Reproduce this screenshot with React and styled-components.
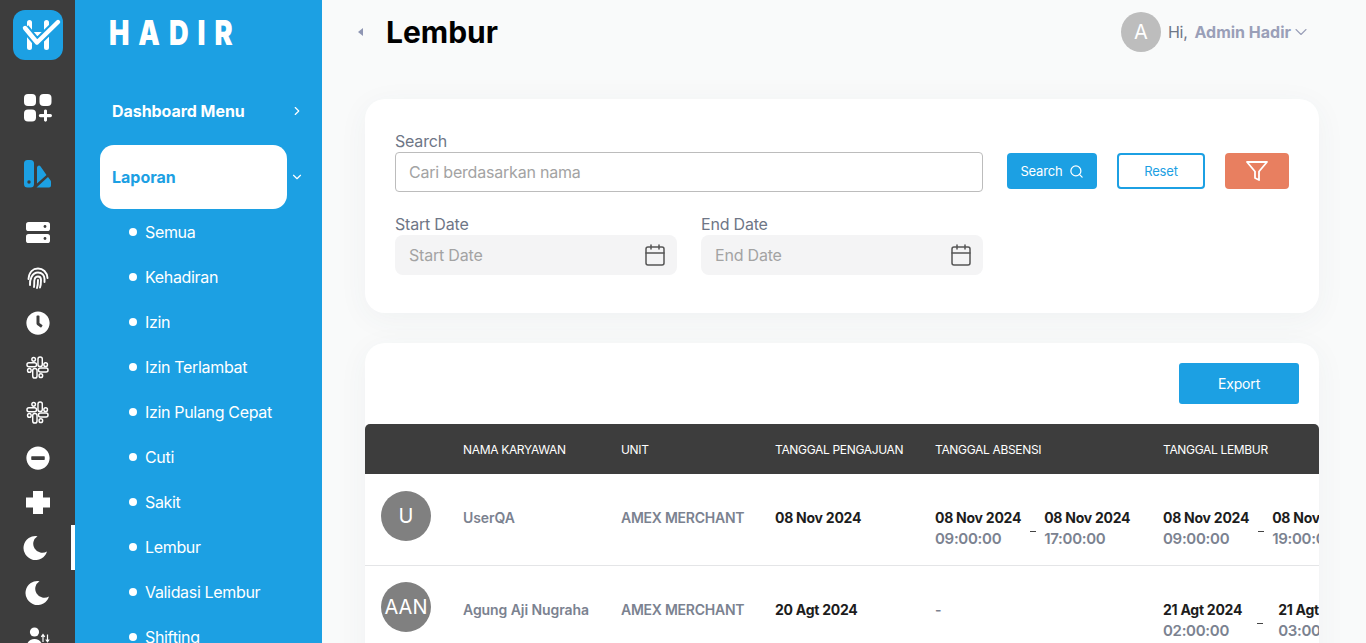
import React from "react";
import styled, { createGlobalStyle } from "styled-components";
import { Calendar, ChevronDown, ChevronRight, Search } from "lucide-react";
import { FiFilter } from "react-icons/fi";
import { FaClock, FaMinusCircle } from "react-icons/fa";

const BLUE = "#1ca0e3";
const DARK = "#3d3d3d";
const FONT = `Inter, "Noto Sans", "Liberation Sans", sans-serif`;

const GlobalStyle = createGlobalStyle`
  html, body {
    margin: 0;
    height: 100%;
    overflow: hidden;
    font-family: ${FONT};
    background: #f9fafa;
  }
  * { box-sizing: border-box; }
`;

const Shell = styled.div`
  display: flex;
  height: 100vh;
  overflow: hidden;
`;

const Rail = styled.aside`
  width: 75px;
  flex: none;
  background: ${DARK};
  padding-top: 10px;
  display: flex;
  flex-direction: column;
  overflow: hidden;
`;

const LogoTile = styled.div`
  width: 50px;
  height: 50px;
  flex: none;
  margin: 0 0 25px 13px;
  border-radius: 12px;
  background: ${BLUE};
  svg { display: block; }
`;

const RailItem = styled.div`
  height: 45px;
  flex: none;
  display: flex;
  align-items: center;
  justify-content: center;
  color: #fff;
  margin-top: ${(p) => p.$top || 0}px;
  border-right: ${(p) => (p.$active ? "4px solid #fff" : "none")};
  svg { display: block; }
`;

const Sidebar = styled.aside`
  width: 247px;
  flex: none;
  background: ${BLUE};
  color: #fff;
  overflow: hidden;
`;

const Brand = styled.div`
  height: 81px;
  padding: 14px 0 0 34px;
  font-size: 34px;
  line-height: 38px;
  font-weight: 900;
  letter-spacing: 11.2px;
  transform: scaleX(0.8);
  transform-origin: 34px 0;
`;

const NavRow = styled.div`
  display: flex;
  align-items: center;
  justify-content: space-between;
  width: 229px;
  height: 59px;
  padding-left: 37px;
  font-size: 16px;
  font-weight: 700;
  letter-spacing: -0.05px;
`;

const OpenRow = styled.div`
  display: flex;
  align-items: center;
  gap: 3px;
  margin: 5px 0 0 25px;
`;

const ActivePill = styled.div`
  width: 187px;
  height: 64px;
  padding-left: 12px;
  display: flex;
  align-items: center;
  background: #fff;
  border-radius: 14px;
  color: ${BLUE};
  font-size: 16px;
  font-weight: 700;
`;

const SubItem = styled.div`
  height: 45px;
  display: flex;
  align-items: center;
  gap: 8px;
  padding-left: 54px;
  font-size: 16px;
  letter-spacing: -0.33px;
  white-space: nowrap;
  &::before {
    content: "";
    width: 8px;
    height: 8px;
    border-radius: 50%;
    background: #fff;
  }
`;

const Main = styled.main`
  flex: 1;
  min-width: 0;
  padding: 0 47px 0 43px;
  overflow: hidden;
`;

const Topbar = styled.header`
  height: 64px;
  display: flex;
  align-items: center;
`;

const Collapse = styled.span`
  width: 0;
  height: 0;
  margin: 0 23px 0 -7px;
  border-style: solid;
  border-width: 4.5px 5px 4.5px 0;
  border-color: transparent #8f96b3 transparent transparent;
`;

const Title = styled.h1`
  margin: 0;
  flex: 1;
  font-size: 30px;
  font-weight: 700;
  color: #000;
`;

const UserMenu = styled.div`
  display: flex;
  align-items: center;
  margin-right: 8px;
  font-size: 16px;
  color: #6e7686;
`;

const Avatar = styled.div`
  width: ${(p) => p.$size}px;
  height: ${(p) => p.$size}px;
  flex: none;
  border-radius: 50%;
  background: ${(p) => p.$bg};
  color: #fff;
  font-size: 20px;
  display: flex;
  align-items: center;
  justify-content: center;
`;

const Hi = styled.span`
  margin: 0 7px;
  letter-spacing: -0.3px;
`;

const UserName = styled.strong`
  font-weight: 700;
  color: #9a9fb8;
`;

const Card = styled.section`
  background: #fff;
  border-radius: 20px;
  box-shadow: 0 6px 30px rgba(60, 70, 90, 0.05);
  margin-top: ${(p) => p.$top}px;
`;

const FilterCard = styled(Card)`
  height: 214px;
  padding: 32px 30px 0;
`;

const FormRow = styled.div`
  display: flex;
  gap: 24px;
  margin-bottom: 22px;
`;

const Field = styled.label`
  display: block;
  width: ${(p) => p.$width}px;
  font-size: 16px;
  line-height: 20px;
  color: #6e7686;
  letter-spacing: -0.2px;
`;

const InputWrap = styled.div`
  position: relative;
  margin-top: 1px;
  height: 40px;
`;

const Input = styled.input`
  width: 100%;
  height: 100%;
  padding: 0 13px;
  font: inherit;
  letter-spacing: -0.2px;
  color: #333;
  outline: none;
  border: ${(p) => (p.$filled ? "none" : "1px solid #bcbcbc")};
  border-radius: ${(p) => (p.$filled ? 8 : 4)}px;
  background: ${(p) => (p.$filled ? "#f4f4f5" : "#fff")};
  padding-left: ${(p) => (p.$filled ? 14 : 13)}px;
  &::placeholder { color: #a3a3a3; opacity: 1; }
`;

const CalendarMark = styled.span`
  position: absolute;
  right: 10px;
  top: 8px;
  color: #555;
  line-height: 0;
`;

const Actions = styled.div`
  display: flex;
  gap: 20px;
  padding-top: 22px;
`;

const Button = styled.button`
  height: 36px;
  width: ${(p) => p.$width}px;
  padding: 0;
  display: flex;
  align-items: center;
  justify-content: center;
  gap: 6px;
  font-family: ${FONT};
  font-size: 13px;
  letter-spacing: -0.15px;
  color: #fff;
  background: ${BLUE};
  border: none;
  border-radius: 4px;
`;

const ResetButton = styled(Button)`
  background: #fff;
  color: ${BLUE};
  border: 2px solid ${BLUE};
`;

const FilterButton = styled(Button)`
  background: #e87f60;
`;

const TableCard = styled(Card)`
  height: 400px;
  overflow: hidden;
  padding-top: 20px;
`;

const TableTools = styled.div`
  display: flex;
  justify-content: flex-end;
  padding-right: 20px;
  margin-bottom: 20px;
`;

const ExportButton = styled(Button)`
  width: 120px;
  height: 41px;
  font-size: 14px;
  border-radius: 3px;
`;

const columns = "98px 158px 154px 160px 228px 1fr";

const HeadRow = styled.div`
  display: grid;
  grid-template-columns: ${columns};
  align-items: center;
  height: 50px;
  background: ${DARK};
  border-radius: 5px 5px 0 0;
  color: #fff;
  font-size: 12px;
  font-weight: 400;
  letter-spacing: -0.33px;
  white-space: nowrap;
`;

const Row = styled.div`
  display: grid;
  grid-template-columns: ${columns};
  align-items: center;
  height: 91.5px;
  padding-bottom: 3px;
  border-bottom: 1px solid #e4e5e7;
  white-space: nowrap;
`;

const AvatarCell = styled.div`
  padding-left: 16px;
  margin-top: -4px;
`;

const MutedCell = styled.div`
  font-size: 14px;
  font-weight: 600;
  letter-spacing: -0.25px;
  color: #7b8290;
`;

const NameCell = styled(MutedCell)`
  letter-spacing: -0.07px;
`;

const DateCell = styled.div`
  font-size: 14px;
  font-weight: 700;
  letter-spacing: -0.25px;
  color: #1d1d1d;
`;

const RangeCell = styled.div`
  display: flex;
  align-items: center;
  gap: ${(p) => p.$gap}px;
  margin-top: 21px;
`;

const DateStack = styled.div`
  font-size: 14px;
  line-height: 21px;
  font-weight: 700;
  letter-spacing: -0.25px;
  color: #1d1d1d;
`;

const Time = styled.div`
  font-weight: 600;
  font-size: 15px;
  letter-spacing: -0.3px;
  color: #7b8290;
`;

const Dash = styled.span`
  width: 6px;
  height: 1px;
  margin-top: 7px;
  background: #444;
  flex: none;
`;

const AppLogo = () => (
  <svg width="50" height="50" viewBox="0 0 50 50" fill="none">
    <path d="M16.5 12.5v25M33.5 12.5v25" stroke="#fff" strokeWidth="5" strokeLinecap="round" />
    <path d="M17 24h16" stroke="#fff" strokeWidth="4" />
    <path d="M12 18l12 14.5L45 12" stroke={BLUE} strokeWidth="8.5" strokeLinecap="butt" />
    <path d="M12 18l12 14.5L45 12" stroke="#fff" strokeWidth="4.4" strokeLinecap="round" strokeLinejoin="round" />
  </svg>
);

const GridPlus = () => (
  <svg width="28" height="28" viewBox="0 0 28 28" fill="#fff">
    <rect x="0" y="0" width="12" height="12" rx="4" />
    <rect x="15.5" y="0" width="12" height="12" rx="4" />
    <rect x="0" y="15.5" width="12" height="12" rx="4" />
    <path d="M20 16.5a1.6 1.6 0 0 1 3 0V20h3.4a1.6 1.6 0 0 1 0 3.2H23v3.4a1.6 1.6 0 0 1-3 0v-3.4h-3.6a1.6 1.6 0 0 1 0-3.2H20z" />
  </svg>
);

const BrandMark = () => (
  <svg width="28" height="28" viewBox="0 0 28 28">
    <path d="M3.5 0h3A3.5 3.5 0 0 1 10 3.5V24a3.5 3.5 0 0 1-3.5 3.5h-3A3.5 3.5 0 0 1 0 24V3.5A3.5 3.5 0 0 1 3.5 0z" fill={BLUE} />
    <circle cx="5" cy="22" r="1.7" fill={DARK} />
    <path d="M13 7.5a2 2 0 0 1 3.4-1.3L22.5 15 13 23.5z" fill={BLUE} />
    <path d="M12.5 27.5L24 17l2.6 3.4a2 2 0 0 1 .4 1.4v3.7a2 2 0 0 1-2 2z" fill={BLUE} />
  </svg>
);

const ServerIcon = () => (
  <svg width="26" height="24" viewBox="0 0 26 24" fill="#fff">
    <rect x="1" y="1" width="24" height="9" rx="2.6" />
    <rect x="1" y="13" width="24" height="9" rx="2.6" />
    <circle cx="20" cy="5.5" r="1.4" fill={DARK} />
    <circle cx="20" cy="17.5" r="1.4" fill={DARK} />
  </svg>
);

const FingerIcon = () => (
  <svg width="24" height="22" viewBox="0 0 24 22" fill="none" stroke="#fff" strokeWidth="1.9" strokeLinecap="round">
    <path d="M2.5 12C3 5 7 1.5 12 1.5S21 5 21.5 11" />
    <path d="M4 18c-.2-2 0-5 1.5-8C7 7 9.5 5.5 12 5.5c4 0 6.5 3 6.5 6.5v3" />
    <path d="M8 20c.5-2 0-6 .5-7.5C9 10.5 10.5 9.5 12 9.5c2 0 3 1.5 3 3.5s0 5-1 7.5" />
    <path d="M12 13c0 2.5 0 5-1 8" />
  </svg>
);

const SlackIcon = () => (
  <svg width="23" height="23" viewBox="-1 -1 24 24" fill="none" stroke="#fff" strokeWidth="1.5">
    <rect x="11.5" y="0" width="4.5" height="10" rx="2.25" />
    <rect x="0" y="6" width="10" height="4.2" rx="2.1" />
    <circle cx="7" cy="2.5" r="1.9" />
    <circle cx="19.5" cy="8" r="1.9" />
    <rect x="12" y="11.5" width="10" height="4.2" rx="2.1" />
    <rect x="6" y="12" width="4.5" height="10" rx="2.25" />
    <circle cx="14.5" cy="19.5" r="1.9" />
    <circle cx="2.5" cy="14" r="1.9" />
  </svg>
);

const PlusIcon = () => (
  <svg width="24" height="23" viewBox="0 0 24 23" fill="#fff">
    <path d="M7 0h10v6.5h7v10h-7V23H7v-6.500H0v-10h7z" />
  </svg>
);

const MoonIcon = () => (
  <svg width="25" height="25" viewBox="0 0 25 25" fill="#fff">
    <path d="M14.5 1.2A12 12 0 1 0 24 16.5A8.600 8.600 0 0 1 14.500 1.200Z" />
  </svg>
);

const UserArrows = () => (
  <svg width="28" height="28" viewBox="0 0 28 28" fill="#fff">
    <circle cx="10.5" cy="8" r="4.600" />
    <path d="M2.5 24c0-6 3.500-9 8-9s8 3 8 9v4h-16z" />
    <path d="M19 18v-7M17.300 12.800L19 10.500l1.700 2.300M23.500 10.500v7M21.800 15.500l1.700 2.300 1.700-2.300" stroke="#fff" strokeWidth="1.200" fill="none" />
  </svg>
);

const subItems = ["Semua", "Kehadiran", "Izin", "Izin Terlambat", "Izin Pulang Cepat", "Cuti", "Sakit", "Lembur", "Validasi Lembur", "Shifting"];

const Range = ({ from, to, gap = 8.5 }) => (
  <RangeCell $gap={gap}>
    <DateStack>
      {from[0]}
      <Time>{from[1]}</Time>
    </DateStack>
    <Dash />
    <DateStack>
      {to[0]}
      <Time>{to[1]}</Time>
    </DateStack>
  </RangeCell>
);

const App = () => (
  <>
    <GlobalStyle />
    <Shell>
      <Rail>
        <LogoTile><AppLogo /></LogoTile>
        <RailItem><GridPlus /></RailItem>
        <RailItem $top={21}><BrandMark /></RailItem>
        <RailItem $top={14}><ServerIcon /></RailItem>
        <RailItem><FingerIcon /></RailItem>
        <RailItem><FaClock size={24} /></RailItem>
        <RailItem><SlackIcon /></RailItem>
        <RailItem><SlackIcon /></RailItem>
        <RailItem><FaMinusCircle size={24} /></RailItem>
        <RailItem><PlusIcon /></RailItem>
        <RailItem $active><MoonIcon /></RailItem>
        <RailItem><MoonIcon /></RailItem>
        <RailItem><UserArrows /></RailItem>
      </Rail>
      <Sidebar>
        <Brand>HADIR</Brand>
        <NavRow>
          Dashboard Menu
          <ChevronRight size={14} strokeWidth={2} />
        </NavRow>
        <OpenRow>
          <ActivePill>Laporan</ActivePill>
          <ChevronDown size={14} strokeWidth={2} />
        </OpenRow>
        {subItems.map((item) => (
          <SubItem key={item}>{item}</SubItem>
        ))}
      </Sidebar>
      <Main>
        <Topbar>
          <Collapse />
          <Title>Lembur</Title>
          <UserMenu>
            <Avatar $size={40} $bg="#bdbdbd">A</Avatar>
            <Hi>Hi,</Hi>
            <UserName>Admin Hadir</UserName>
            <ChevronDown size={20} strokeWidth={1.3} color="#9a9fb8" />
          </UserMenu>
        </Topbar>
        <FilterCard $top={35}>
          <FormRow>
            <Field $width={588}>
              Search
              <InputWrap>
                <Input placeholder="Cari berdasarkan nama" />
              </InputWrap>
            </Field>
            <Actions>
              <Button $width={90}>Search <Search size={15} strokeWidth={2} /></Button>
              <ResetButton $width={88}>Reset</ResetButton>
              <FilterButton $width={64}><FiFilter size={24} strokeWidth={1.8} /></FilterButton>
            </Actions>
          </FormRow>
          <FormRow>
            <Field $width={282}>
              Start Date
              <InputWrap>
                <Input $filled placeholder="Start Date" />
                <CalendarMark><Calendar size={24} strokeWidth={1.5} /></CalendarMark>
              </InputWrap>
            </Field>
            <Field $width={282}>
              End Date
              <InputWrap>
                <Input $filled placeholder="End Date" />
                <CalendarMark><Calendar size={24} strokeWidth={1.5} /></CalendarMark>
              </InputWrap>
            </Field>
          </FormRow>
        </FilterCard>
        <TableCard $top={30}>
          <TableTools>
            <ExportButton>Export</ExportButton>
          </TableTools>
          <HeadRow>
            <span />
            <span>NAMA KARYAWAN</span>
            <span>UNIT</span>
            <span>TANGGAL PENGAJUAN</span>
            <span>TANGGAL ABSENSI</span>
            <span>TANGGAL LEMBUR</span>
          </HeadRow>
          <Row>
            <AvatarCell><Avatar $size={50} $bg="#808080">U</Avatar></AvatarCell>
            <NameCell>UserQA</NameCell>
            <MutedCell>AMEX MERCHANT</MutedCell>
            <DateCell>08 Nov 2024</DateCell>
            <Range from={["08 Nov 2024", "09:00:00"]} to={["08 Nov 2024", "17:00:00"]} />
            <Range from={["08 Nov 2024", "09:00:00"]} to={["08 Nov 2024", "19:00:00"]} />
          </Row>
          <Row>
            <AvatarCell><Avatar $size={50} $bg="#808080">AAN</Avatar></AvatarCell>
            <NameCell>Agung Aji Nugraha</NameCell>
            <MutedCell>AMEX MERCHANT</MutedCell>
            <DateCell>20 Agt 2024</DateCell>
            <MutedCell>-</MutedCell>
            <Range from={["21 Agt 2024", "02:00:00"]} to={["21 Agt 2024", "03:00:00"]} gap={15} />
          </Row>
        </TableCard>
      </Main>
    </Shell>
  </>
);

export default App;
